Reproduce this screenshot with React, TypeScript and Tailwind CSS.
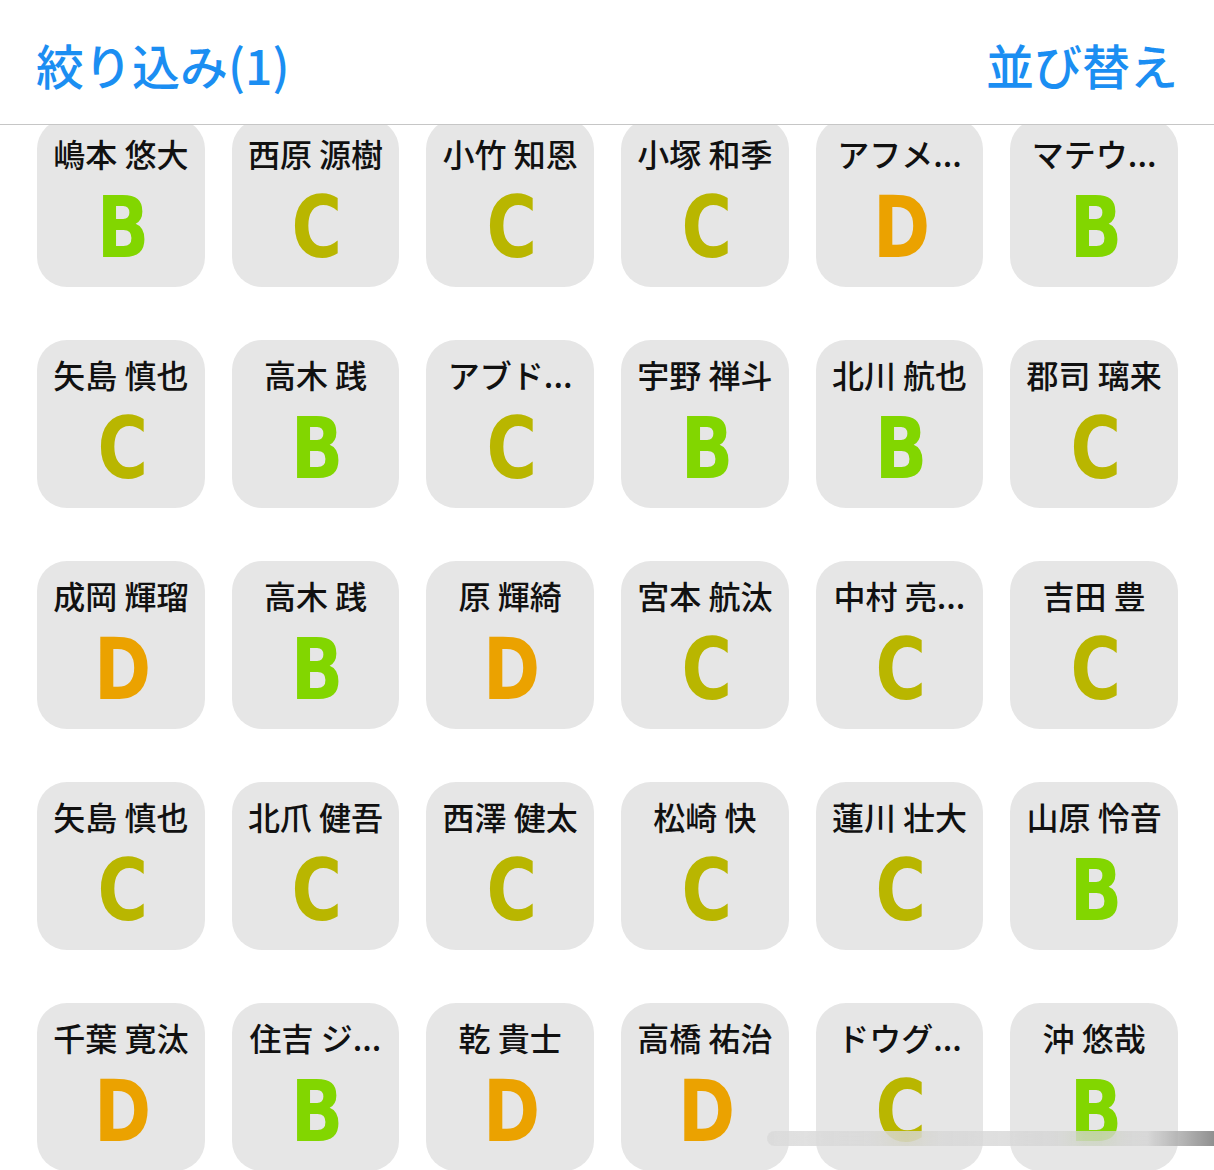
import React from 'react';

type Grade = 'B' | 'C' | 'D';

const players: { name: string; grade: Grade }[] = [
  { name: '嶋本 悠大', grade: 'B' },
  { name: '西原 源樹', grade: 'C' },
  { name: '小竹 知恩', grade: 'C' },
  { name: '小塚 和季', grade: 'C' },
  { name: 'アフメ...', grade: 'D' },
  { name: 'マテウ...', grade: 'B' },
  { name: '矢島 慎也', grade: 'C' },
  { name: '高木 践', grade: 'B' },
  { name: 'アブド...', grade: 'C' },
  { name: '宇野 禅斗', grade: 'B' },
  { name: '北川 航也', grade: 'B' },
  { name: '郡司 璃来', grade: 'C' },
  { name: '成岡 輝瑠', grade: 'D' },
  { name: '高木 践', grade: 'B' },
  { name: '原 輝綺', grade: 'D' },
  { name: '宮本 航汰', grade: 'C' },
  { name: '中村 亮...', grade: 'C' },
  { name: '吉田 豊', grade: 'C' },
  { name: '矢島 慎也', grade: 'C' },
  { name: '北爪 健吾', grade: 'C' },
  { name: '西澤 健太', grade: 'C' },
  { name: '松崎 快', grade: 'C' },
  { name: '蓮川 壮大', grade: 'C' },
  { name: '山原 怜音', grade: 'B' },
  { name: '千葉 寛汰', grade: 'D' },
  { name: '住吉 ジ...', grade: 'B' },
  { name: '乾 貴士', grade: 'D' },
  { name: '高橋 祐治', grade: 'D' },
  { name: 'ドウグ...', grade: 'C' },
  { name: '沖 悠哉', grade: 'B' },
];

const gradeColor: Record<Grade, string> = {
  B: 'text-[#82d600]',
  C: 'text-[#b9b600]',
  D: 'text-[#eba200]',
};

const jp = { fontFamily: '"Noto Sans CJK JP", "Noto Sans", sans-serif' };
const grade = { fontFamily: '"DejaVu Sans Condensed", "DejaVu Sans", sans-serif', fontStretch: 'condensed' as const };

export default function App() {
  return (
    <div className="relative w-[1214px] h-[1170px] overflow-hidden bg-white" style={jp}>
      {/* top bar */}
      <header className="h-[125px] flex items-center justify-between pl-[36px] pr-[36px] border-b border-[#c6c6c6] bg-white relative z-10">
        <button className="text-[48px] leading-none font-medium text-[#1b8ef2] pt-[4px]">絞り込み(1)</button>
        <button className="text-[48px] leading-none font-medium text-[#1b8ef2] pt-[4px]">並び替え</button>
      </header>

      <div className="h-[1045px] overflow-hidden">
        <div className="grid grid-cols-6 gap-x-[27px] gap-y-[53px] pl-[37px] pr-[36px] -mt-[6px]">
          {players.map((p, i) => (
            <PlayerCard key={i} name={p.name} grade={p.grade} />
          ))}
        </div>
      </div>

      {/* scroll indicator */}
      <div className="absolute left-[767px] top-[1131px] right-0 h-[15px] rounded-l-full backdrop-blur-md bg-gradient-to-r from-[#d9d9d9]/80 via-[#d2d2d2]/70 via-85% to-[#8a8a8a]/95" />
    </div>
  );
}

function PlayerCard({ name, grade: g }: { name: string; grade: Grade }) {
  return (
    <div className="h-[168px] rounded-[30px] bg-[#e6e6e6] flex flex-col items-center">
      <span className="pt-[18px] text-[32px] leading-none font-medium text-[#111] whitespace-nowrap">{name}</span>
      <span className={`mt-[16px] pl-[4px] text-[85px] leading-none font-bold scale-x-[0.9] ${gradeColor[g]}`} style={grade}>
        {g}
      </span>
    </div>
  );
}
